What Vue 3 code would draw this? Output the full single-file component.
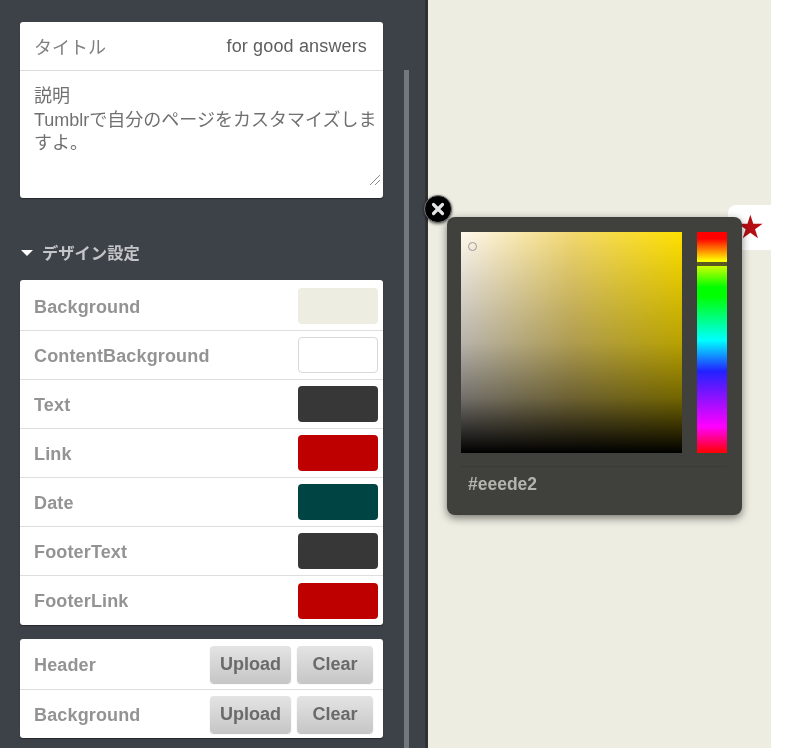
<script setup>
const colors = [
  { name: 'Background', color: '#eeede2' },
  { name: 'ContentBackground', color: '#ffffff' },
  { name: 'Text', color: '#373737' },
  { name: 'Link', color: '#bf0000' },
  { name: 'Date', color: '#004444' },
  { name: 'FooterText', color: '#373737' },
  { name: 'FooterLink', color: '#bf0000' },
]
const uploads = ['Header', 'Background']
</script>

<template>
  <div class="page">
    <aside class="sidebar">
      <div class="scrollbar"></div>
      <section class="panel">
        <div class="title-row">
          <span class="jp-label">タイトル</span>
          <span class="title-value">for good answers</span>
        </div>
        <div class="description">
          説明<br />Tumblrで自分のページをカスタマイズしますよ。
          <svg class="grip" width="12" height="12" viewBox="0 0 12 12">
            <path d="M1 11 L11 1 M6 11 L11 6" stroke="#8a8a8a" stroke-width="1" fill="none" />
          </svg>
        </div>
      </section>

      <h2 class="section-head"><span class="caret"></span>デザイン設定</h2>

      <section class="panel colors">
        <div v-for="c in colors" :key="c.name" class="row color-row">
          <span class="row-label">{{ c.name }}</span>
          <span class="swatch" :class="{ outlined: c.color === '#ffffff' }" :style="{ background: c.color }"></span>
        </div>
      </section>

      <section class="panel uploads">
        <div v-for="u in uploads" :key="u" class="row upload-row">
          <span class="row-label">{{ u }}</span>
          <span class="buttons">
            <button class="btn upload">Upload</button>
            <button class="btn clear">Clear</button>
          </span>
        </div>
      </section>
    </aside>

    <main class="canvas">
      <div class="star-tab">★</div>
      <div class="picker">
        <button class="close">
          <svg width="16" height="16" viewBox="0 0 16 16">
            <path d="M3.5 3.5 L12.5 12.5 M12.5 3.5 L3.5 12.5" stroke="#e4e4e4" stroke-width="3.2" stroke-linecap="round" />
          </svg>
        </button>
        <div class="picker-top">
          <div class="sb-square"><span class="sb-handle"></span></div>
          <div class="hue"><span class="hue-handle"></span></div>
        </div>
        <div class="hex">#eeede2</div>
      </div>
    </main>
    <div class="margin"></div>
  </div>
</template>

<style scoped>
.page {
  position: relative;
  display: flex;
  width: 800px;
  height: 748px;
  overflow: hidden;
  font-family: "Liberation Sans", "Noto Sans CJK JP", sans-serif;
}
.sidebar {
  position: relative;
  box-sizing: border-box;
  width: 428px;
  flex: none;
  padding: 22px 0 0 20px;
  background: #3d4148;
  border-right: 3px solid #2f3136;
}
.scrollbar {
  position: absolute;
  left: 404px;
  top: 70px;
  bottom: 0;
  width: 5px;
  background: #74777b;
}
.panel {
  width: 363px;
  background: #fff;
  border-radius: 3px;
  box-shadow: 0 1px 1px rgba(0, 0, 0, 0.4);
  overflow: hidden;
  filter: blur(0.7px);
}
.title-row {
  display: flex;
  justify-content: space-between;
  align-items: center;
  box-sizing: border-box;
  height: 49px;
  padding: 0 16px 0 14px;
  border-bottom: 1px solid #dcdcdc;
  font-size: 18px;
}
.jp-label {
  color: #808080;
}
.title-value {
  color: #5e5e5e;
  letter-spacing: 0.15px;
}
.description {
  position: relative;
  box-sizing: border-box;
  height: 127px;
  padding: 14px 4px 0 14px;
  font-size: 18px;
  line-height: 23.5px;
  color: #707070;
}
.grip {
  position: absolute;
  right: 2px;
  bottom: 12px;
}
.section-head {
  display: flex;
  align-items: center;
  height: 30px;
  margin: 39px 0 13px;
  font-size: 16.3px;
  font-weight: 700;
  color: #c4c5c8;
  filter: blur(0.6px);
}
.caret {
  width: 0;
  height: 0;
  margin: 1px 9px 0 1px;
  border-left: 6px solid transparent;
  border-right: 6px solid transparent;
  border-top: 6px solid #fff;
}
.colors {
  padding-top: 2px;
}
.row {
  display: flex;
  align-items: center;
  justify-content: space-between;
  box-sizing: border-box;
  height: 49px;
  border-bottom: 1px solid #dedede;
}
.row:last-child {
  border-bottom: 0;
}
.color-row {
  padding: 0 5px 0 14px;
}
.row-label {
  padding-top: 2px;
  font-size: 18px;
  font-weight: 700;
  letter-spacing: 0.15px;
  color: #939393;
}
.swatch {
  width: 80px;
  height: 36px;
  border-radius: 4px;
}
.swatch.outlined {
  box-sizing: border-box;
  border: 1px solid #d8d8d8;
}
.uploads {
  box-sizing: border-box;
  height: 99px;
  margin-top: 14px;
  padding-top: 1px;
}
.upload-row {
  padding: 0 10px 0 14px;
}
.upload-row:first-child {
  height: 50px;
}
.buttons {
  display: flex;
  gap: 6px;
}
.btn {
  height: 37px;
  padding: 0;
  border: 0;
  border-radius: 4px;
  background: linear-gradient(#e4e4e4, #c6c6c6);
  box-shadow: 0 1px 1px rgba(0, 0, 0, 0.25);
  font-family: inherit;
  font-size: 18px;
  font-weight: 700;
  color: #6a6a6a;
}
.upload {
  width: 81px;
}
.clear {
  width: 76px;
}
.canvas {
  position: relative;
  width: 343px;
  flex: none;
  background: #eeede2;
}
.margin {
  flex: 1;
  background: #fff;
}
.star-tab {
  position: absolute;
  left: 300px;
  top: 205px;
  width: 43px;
  height: 45px;
  box-sizing: border-box;
  padding-left: 8px;
  background: #fff;
  border-radius: 8px 0 0 8px;
  color: #b50f14;
  font-family: "DejaVu Sans", sans-serif;
  font-size: 32px;
  line-height: 45px;
  filter: blur(0.4px);
}
.picker {
  position: absolute;
  left: 19px;
  top: 217px;
  box-sizing: border-box;
  width: 295px;
  height: 298px;
  padding: 15px 15px 0 14px;
  background: #40403c;
  border-radius: 8px;
  box-shadow: 0 3px 8px rgba(0, 0, 0, 0.5);
  filter: blur(0.6px);
}
.close {
  position: absolute;
  left: -23px;
  top: -22px;
  display: flex;
  align-items: center;
  justify-content: center;
  width: 28px;
  height: 28px;
  padding: 0;
  border: 1px solid #777;
  border-radius: 50%;
  background: #000;
  box-shadow: 0 1px 3px rgba(0, 0, 0, 0.6);
}
.picker-top {
  display: flex;
  justify-content: space-between;
  height: 221px;
}
.sb-square {
  position: relative;
  width: 221px;
  background:
    linear-gradient(to bottom, rgba(0, 0, 0, 0) 0%, rgba(0, 0, 0, 0.14) 25%, rgba(0, 0, 0, 0.28) 50%, rgba(0, 0, 0, 0.55) 75%, #000 100%),
    linear-gradient(to right, #fff8ee 0%, #f2d870 50%, #ffe000 100%);
}
.sb-handle {
  position: absolute;
  left: 7px;
  top: 10px;
  width: 9px;
  height: 9px;
  box-sizing: border-box;
  border: 1px solid #999;
  border-radius: 50%;
}
.hue {
  position: relative;
  width: 30px;
  background: linear-gradient(to bottom, #f00 0%, #f00 3%, #ff0 13%, #0f0 25%, #0f0 29%, #0ff 49%, #22f 63%, #f0f 88%, #f00 100%);
}
.hue-handle {
  position: absolute;
  left: 0;
  right: 0;
  top: 30px;
  height: 4px;
  background: #5a5a20;
}
.hex {
  margin-top: 13px;
  padding: 7px 7px;
  border-top: 1px solid #3a3a36;
  font-size: 17.5px;
  font-weight: 700;
  color: #b4b4af;
}
</style>
